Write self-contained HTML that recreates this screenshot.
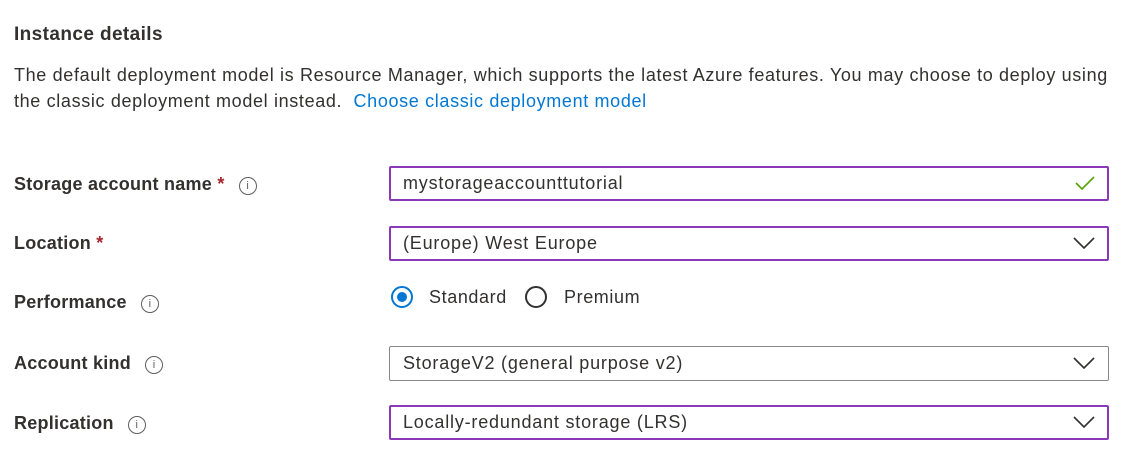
<!DOCTYPE html>
<html><head><style>
body{margin:0;width:1137px;height:457px;background:#fff;font-family:"Liberation Sans",sans-serif;color:#323130;position:relative;overflow:hidden}
.a{position:absolute;white-space:nowrap}
.lbl{font-size:18px;font-weight:bold;letter-spacing:0.25px}
.req{color:#a4262c}
.info{display:inline-block;width:16px;height:16px;border:1px solid #605e5c;border-radius:50%;font-size:11px;text-align:center;line-height:16px;color:#605e5c;font-weight:normal;vertical-align:1px;margin-left:14px;letter-spacing:0}
.box{position:absolute;left:389px;width:716px;height:31px;border:2px solid #8a3ab9;border-radius:2px}
.box span{position:absolute;left:12px;top:5px;font-size:18px;letter-spacing:0.8px;color:#323130}
.chev{position:absolute;right:12px;top:9px}
.radio{position:absolute;width:22px;height:22px;border-radius:50%;box-sizing:border-box}
.p{font-size:18px;letter-spacing:0.65px}
</style></head><body>
<div class="a" style="left:14px;top:24px;font-size:19px;font-weight:bold;letter-spacing:0.4px">Instance details</div>
<div class="a p" style="left:14px;top:65px">The default deployment model is Resource Manager, which supports the latest Azure features. You may choose to deploy using</div>
<div class="a p" style="left:14px;top:91px">the classic deployment model instead. &nbsp;<span style="color:#0078d4">Choose classic deployment model</span></div>

<div class="a lbl" style="left:14px;top:174px">Storage account name <span class="req">*</span><span class="info">i</span></div>
<div class="a lbl" style="left:14px;top:233px">Location <span class="req">*</span></div>
<div class="a lbl" style="left:14px;top:292px">Performance<span class="info">i</span></div>
<div class="a lbl" style="left:14px;top:353px">Account kind<span class="info">i</span></div>
<div class="a lbl" style="left:14px;top:413px">Replication<span class="info">i</span></div>

<div class="box" style="top:166px"><span>mystorageaccounttutorial</span>
<svg class="chev" width="20" height="14" style="top:8px"><path d="M1 7 L7 13 L19 1" fill="none" stroke="#57a300" stroke-width="1.6"/></svg></div>
<div class="box" style="top:226px"><span>(Europe) West Europe</span>
<svg class="chev" width="22" height="12"><path d="M1 1 L11 11 L21 1" fill="none" stroke="#323130" stroke-width="1.6"/></svg></div>

<div class="radio" style="left:391px;top:286px;border:2px solid #0078d4"><div style="position:absolute;left:4px;top:4px;width:10px;height:10px;border-radius:50%;background:#0078d4"></div></div>
<div class="a" style="left:429px;top:287px;font-size:18px;letter-spacing:0.6px">Standard</div>
<div class="radio" style="left:525px;top:286px;border:2px solid #323130"></div>
<div class="a" style="left:564px;top:287px;font-size:18px;letter-spacing:0.6px">Premium</div>

<div class="box" style="top:346px;border:1px solid #8a8886;height:33px;width:718px"><span style="left:13px;top:6px">StorageV2 (general purpose v2)</span>
<svg class="chev" width="22" height="12" style="top:10px;right:13px"><path d="M1 1 L11 11 L21 1" fill="none" stroke="#323130" stroke-width="1.6"/></svg></div>
<div class="box" style="top:405px"><span>Locally-redundant storage (LRS)</span>
<svg class="chev" width="22" height="12"><path d="M1 1 L11 11 L21 1" fill="none" stroke="#323130" stroke-width="1.6"/></svg></div>
</body></html>
